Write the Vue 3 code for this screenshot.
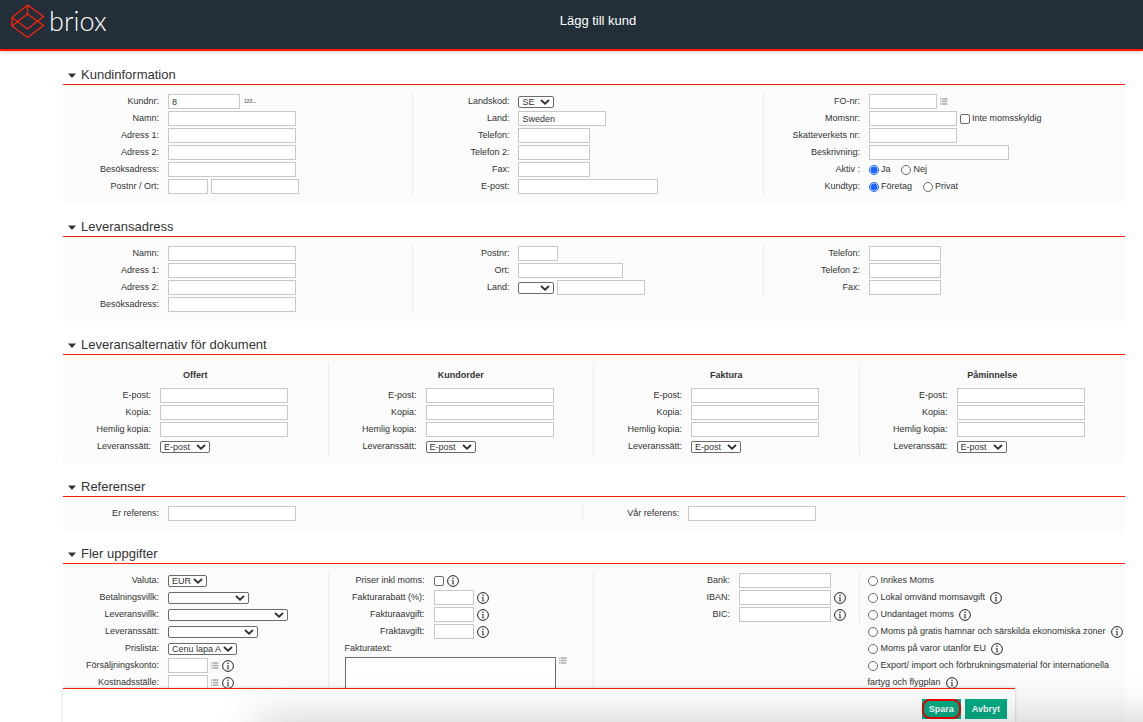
<script setup>
import { ref } from 'vue'

const input = (w, value = '') => ({ type: 'input', w, value })
const select = (w, value = '') => ({ type: 'select', w, value })
const check = (text = '') => ({ type: 'check', text })
const radio = (text, name, value) => ({ type: 'radio', text, name, value })
const list = { type: 'list' }
const info = { type: 'info' }
const numbers = { type: 'numbers' }
const row = (label, ...controls) => ({ label, controls })

const choices = ref({ active: 'ja', kind: 'foretag', vat: '' })

const documentColumn = (title) => ({
  title,
  rows: [
    row('E-post:', input('l')),
    row('Kopia:', input('l')),
    row('Hemlig kopia:', input('l')),
    row('Leveranssätt:', select('mail', 'E-post')),
  ],
})

const sections = [
  {
    title: 'Kundinformation',
    layout: 'thirds',
    columns: [
      {
        rows: [
          row('Kundnr:', input('m', '8'), numbers),
          row('Namn:', input('l')),
          row('Adress 1:', input('l')),
          row('Adress 2:', input('l')),
          row('Besöksadress:', input('l')),
          row('Postnr / Ort:', input('xs'), input('ml')),
        ],
      },
      {
        rows: [
          row('Landskod:', select('code', 'SE')),
          row('Land:', input('ml', 'Sweden')),
          row('Telefon:', input('m')),
          row('Telefon 2:', input('m')),
          row('Fax:', input('m')),
          row('E-post:', input('xl')),
        ],
      },
      {
        rows: [
          row('FO-nr:', input('s'), list),
          row('Momsnr:', input('ml'), check('Inte momsskyldig')),
          row('Skatteverkets nr:', input('ml')),
          row('Beskrivning:', input('xl')),
          row('Aktiv :', radio('Ja', 'active', 'ja'), radio('Nej', 'active', 'nej')),
          row('Kundtyp:', radio('Företag', 'kind', 'foretag'), radio('Privat', 'kind', 'privat')),
        ],
      },
    ],
  },
  {
    title: 'Leveransadress',
    layout: 'thirds',
    columns: [
      {
        rows: [
          row('Namn:', input('l')),
          row('Adress 1:', input('l')),
          row('Adress 2:', input('l')),
          row('Besöksadress:', input('l')),
        ],
      },
      {
        rows: [
          row('Postnr:', input('xs')),
          row('Ort:', input('post')),
          row('Land:', select('code'), input('ml')),
        ],
      },
      {
        rows: [
          row('Telefon:', input('m')),
          row('Telefon 2:', input('m')),
          row('Fax:', input('m')),
        ],
      },
    ],
  },
  {
    title: 'Leveransalternativ för dokument',
    layout: 'quarters documents',
    columns: ['Offert', 'Kundorder', 'Faktura', 'Påminnelse'].map(documentColumn),
  },
  {
    title: 'Referenser',
    layout: 'halves',
    columns: [
      { rows: [row('Er referens:', input('l'))] },
      { rows: [row('Vår referens:', input('l'))] },
    ],
  },
  {
    title: 'Fler uppgifter',
    layout: 'quarters',
    columns: [
      {
        rows: [
          row('Valuta:', select('cur', 'EUR')),
          row('Betalningsvillk:', select('terms')),
          row('Leveransvillk:', select('delivery')),
          row('Leveranssätt:', select('method')),
          row('Prislista:', select('price', 'Cenu lapa A')),
          row('Försäljningskonto:', input('xs'), list, info),
          row('Kostnadsställe:', input('xs'), list, info),
        ],
      },
      {
        rows: [
          row('Priser inkl moms:', check(), info),
          row('Fakturarabatt (%):', input('xs'), info),
          row('Fakturaavgift:', input('xs'), info),
          row('Fraktavgift:', input('xs'), info),
        ],
        note: 'Fakturatext:',
      },
      {
        wide: true,
        rows: [
          row('Bank:', input('bank')),
          row('IBAN:', input('bank'), info),
          row('BIC:', input('bank'), info),
        ],
      },
      {
        vat: [
          { text: 'Inrikes Moms' },
          { text: 'Lokal omvänd momsavgift', info: true },
          { text: 'Undantaget moms', info: true },
          { text: 'Moms på gratis hamnar och särskilda ekonomiska zoner', info: true },
          { text: 'Moms på varor utanför EU', info: true },
          { text: 'Export/ import och förbrukningsmaterial för internationella fartyg och flygplan', info: true, wraps: true },
        ],
      },
    ],
  },
]
</script>

<template>
  <div class="app">
    <svg class="defs" width="0" height="0" aria-hidden="true">
      <symbol id="icon-info" viewBox="0 0 12 12">
        <circle cx="6" cy="6" r="5.4" fill="#fff" stroke="#222" stroke-width="1" />
        <circle cx="6" cy="3.3" r="0.8" fill="#222" />
        <path d="M4.7 5H6.5V8.7H7.5V9.3H4.6V8.7H5.5V5.6H4.7Z" fill="#222" />
      </symbol>
      <symbol id="icon-list" viewBox="0 0 8 7">
        <path d="M0 1H1.6M0 3.5H1.6M0 6H1.6" stroke="#bbb" stroke-width="1.5" />
        <path d="M2 1H7.4M2 3.5H7.4M2 6H7.4" stroke="#aaa" stroke-width="1.5" />
      </symbol>
    </svg>

    <header class="top">
      <a class="brand" href="#" aria-label="briox">
        <svg class="mark" viewBox="0 0 34 34" aria-hidden="true">
          <path d="M16.5 1L32.5 12.5L16.5 25L1 13.5ZM16.5 10L32.5 21.5L16.5 33.5L1 22ZM16.5 1V10M1 13.5V22" fill="none" stroke="#ff200a" stroke-width="1.3" />
        </svg>
        <span class="brand-name">briox</span>
      </a>
      <h1>Lägg till kund</h1>
    </header>

    <main>
      <section v-for="(s, si) in sections" :key="s.title">
        <h2>
          <svg class="caret" viewBox="0 0 8 5" aria-hidden="true"><path d="M0 0.5H8L4 5Z" fill="#333" /></svg>
          {{ s.title }}
        </h2>
        <div class="panel" :class="s.layout">
          <div v-for="(c, ci) in s.columns" :key="ci" class="column" :class="{ wide: c.wide }">
            <h3 v-if="c.title">{{ c.title }}</h3>
            <div v-for="(r, ri) in c.rows" :key="ri" class="row">
              <label class="name" :for="`f-${si}-${ci}-${ri}-0`">{{ r.label }}</label>
              <div class="controls">
                <template v-for="(k, ki) in r.controls" :key="ki">
                  <input v-if="k.type === 'input'" :id="`f-${si}-${ci}-${ri}-${ki}`" class="text" :class="`w-${k.w}`" type="text" :value="k.value" :aria-label="r.label" />
                  <select v-else-if="k.type === 'select'" :id="`f-${si}-${ci}-${ri}-${ki}`" :class="`w-${k.w}`">
                    <option>{{ k.value }}</option>
                  </select>
                  <label v-else-if="k.type === 'check'" class="option">
                    <input :id="`f-${si}-${ci}-${ri}-${ki}`" type="checkbox" />{{ k.text }}
                  </label>
                  <label v-else-if="k.type === 'radio'" class="option choice">
                    <input :id="`f-${si}-${ci}-${ri}-${ki}`" v-model="choices[k.name]" type="radio" :name="k.name" :value="k.value" />{{ k.text }}
                  </label>
                  <svg v-else-if="k.type === 'info'" class="info"><use href="#icon-info" /></svg>
                  <svg v-else-if="k.type === 'list'" class="list"><use href="#icon-list" /></svg>
                  <span v-else class="numbers">123...</span>
                </template>
              </div>
            </div>
            <div v-if="c.note" class="note">
              <label for="invoice-text">{{ c.note }}</label>
              <div class="note-field">
                <textarea id="invoice-text"></textarea>
                <svg class="list"><use href="#icon-list" /></svg>
              </div>
            </div>
            <div v-if="c.vat" class="vat">
              <div v-for="v in c.vat" :key="v.text" class="vat-row" :class="{ wraps: v.wraps }">
                <label><input v-model="choices.vat" type="radio" name="vat" :value="v.text" />{{ v.text }}</label>
                <svg v-if="v.info" class="info"><use href="#icon-info" /></svg>
              </div>
            </div>
          </div>
        </div>
      </section>
    </main>

    <footer class="actions">
      <button class="save" type="button">Spara</button>
      <button type="button">Avbryt</button>
    </footer>
    <div class="shade"></div>
  </div>
</template>

<style>
body {
  margin: 0;
  background: #fff;
}
</style>

<style scoped>
.app {
  position: relative;
  display: flex;
  flex-direction: column;
  height: 100vh;
  overflow: hidden;
  font: 9px/17px "Liberation Sans", Arial, Helvetica, sans-serif;
  color: #333;
}
.app *, .app *::after {
  box-sizing: border-box;
}
.defs {
  position: absolute;
}
.top {
  flex: none;
  display: grid;
  grid-template-columns: 1fr auto 1fr;
  height: 51px;
  background: #222f38;
  border-bottom: 2px solid #fb1d05;
  box-shadow: 0 1px 4px rgba(0, 0, 0, 0.2);
  z-index: 1;
}
.brand {
  display: flex;
  align-items: flex-start;
  padding: 4px 0 0 11px;
  color: #fff;
  text-decoration: none;
}
.mark {
  width: 34px;
  height: 34px;
}
.brand-name {
  margin-left: 4px;
  font: 300 27px/34px Lato, "Open Sans", sans-serif;
}
h1 {
  margin: 12px 0 0;
  padding-left: 53px;
  font-size: 13px;
  line-height: 18px;
  font-weight: 400;
  color: #fff;
}
main {
  flex: 1;
  min-height: 0;
  padding: 0 18px 0 63px;
  overflow: hidden;
}
h2 {
  display: flex;
  align-items: center;
  height: 34px;
  margin: 0;
  padding: 14px 0 0 5px;
  border-bottom: 1px solid #fb1d05;
  font-size: 13px;
  line-height: 19px;
  font-weight: 400;
}
.caret {
  width: 8px;
  height: 5px;
  margin: 2px 5px 0 0;
}
.panel {
  display: flex;
  align-items: flex-start;
  padding: 8px 0;
  background: #fbfbfb;
}
.column {
  flex: 0 0 33%;
  min-width: 0;
  border-right: 1px solid #eaeaea;
}
.quarters .column {
  flex-basis: 25%;
}
.halves .column {
  flex-basis: 49%;
}
.column:last-child {
  border-right: 0;
}
h3 {
  margin: 0;
  font-size: 9px;
  line-height: 24px;
  text-align: center;
}
.row {
  display: flex;
  height: 17px;
}
.name {
  flex: none;
  width: 105px;
  padding-right: 9px;
  text-align: right;
  white-space: nowrap;
}
.documents .name {
  width: 97px;
}
.wide .name {
  width: 145px;
}
.controls {
  display: flex;
  align-items: center;
  gap: 3px;
}
.text {
  height: 15px;
  padding: 0 3px;
  border: 1px solid #c8c8c8;
  background: #fff;
  font: inherit;
  line-height: 13px;
  color: inherit;
}
select {
  appearance: none;
  height: 12px;
  padding: 0 3px;
  border: 1px solid #6b6b6b;
  border-radius: 2px;
  background: #fff url("data:image/svg+xml,%3Csvg xmlns='http://www.w3.org/2000/svg' viewBox='0 0 10 6'%3E%3Cpath d='M1 1L5 4.6L9 1' fill='none' stroke='%23333' stroke-width='1.9'/%3E%3C/svg%3E") no-repeat right 3px center / 10px 6px;
  font: inherit;
  line-height: 10px;
  color: inherit;
}
.w-xs { width: 40px; }
.w-s { width: 68px; }
.w-m { width: 72px; }
.w-ml { width: 88px; }
.w-bank { width: 92px; }
.w-post { width: 105px; }
.w-l { width: 128px; }
.w-xl { width: 140px; }
.w-code { width: 36px; }
.w-mail { width: 50px; }
.w-cur { width: 39px; }
.w-terms { width: 81px; }
.w-delivery { width: 120px; }
.w-method { width: 90px; }
.w-price { width: 69px; }

input[type="radio"],
input[type="checkbox"] {
  appearance: none;
  flex: none;
  width: 10px;
  height: 10px;
  margin: 0;
  border: 1px solid #6b6b6b;
  border-radius: 2px;
  background: #fff;
}
input[type="radio"] {
  border-radius: 50%;
}
input[type="radio"]:checked {
  border-color: #1a66ff;
  background: radial-gradient(circle, #1a66ff 3px, #fff 4px);
}
.option {
  display: flex;
  align-items: center;
  gap: 2px;
  white-space: nowrap;
}
.choice {
  margin-right: 8px;
}
.info {
  flex: none;
  width: 12px;
  height: 12px;
}
.list {
  flex: none;
  width: 8px;
  height: 7px;
}
.numbers {
  margin-left: 1px;
  font-size: 5px;
  font-weight: 700;
  color: #777;
}
.note {
  padding-left: 16px;
}
.note label {
  display: block;
}
.note-field {
  display: flex;
  align-items: flex-start;
  gap: 3px;
}
textarea {
  width: 211px;
  height: 60px;
  border: 1px solid #6b6b6b;
  background: #fff;
  resize: none;
}
.vat {
  padding-left: 8px;
}
.vat-row {
  line-height: 17px;
  white-space: nowrap;
}
.vat-row.wraps {
  white-space: normal;
}
.vat input[type="radio"] {
  margin-right: 3px;
  vertical-align: middle;
}
.vat .info {
  margin-left: 5px;
  vertical-align: middle;
}
.actions {
  position: absolute;
  right: 128px;
  bottom: 0;
  left: 63px;
  display: flex;
  justify-content: flex-end;
  gap: 4px;
  height: 34px;
  padding: 10px 8px 0;
  border-top: 1px solid #fb1d05;
  background: #fff;
  box-shadow: 0 0 3px rgba(0, 0, 0, 0.2);
}
button {
  position: relative;
  height: 20px;
  padding: 0 7px;
  border: 0;
  background: #03ab84;
  font: 700 9px/20px "Liberation Sans", Arial, sans-serif;
  color: #fff;
}
.save::after {
  content: "";
  position: absolute;
  inset: 0;
  border: 2px solid #f00000;
  border-radius: 8px;
}
.shade {
  position: absolute;
  top: 100%;
  right: -40px;
  left: 260px;
  height: 60px;
  box-shadow: 0 0 44px 4px rgba(0, 0, 0, 0.18);
  pointer-events: none;
}
</style>
